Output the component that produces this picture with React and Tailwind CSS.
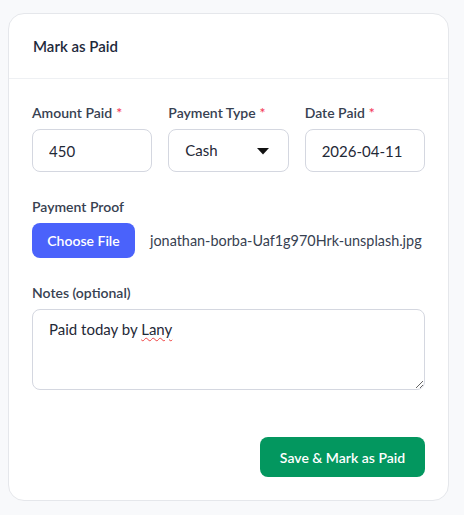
import { useState } from "react";

const font = { fontFamily: "Lato, 'Noto Sans', sans-serif" };

function Label({ children, required }) {
  return (
    <label className="mb-1.5 block text-[14px] leading-5 font-semibold text-[#374151]">
      {children}
      {required && <span className="ml-1 text-[#f43f5e]">*</span>}
    </label>
  );
}

export default function App() {
  const [amount, setAmount] = useState("450");
  const [type, setType] = useState("Cash");
  const [date, setDate] = useState("2026-04-11");

  return (
    <div className="min-h-[515px] w-[464px] bg-[#f8f9fb] pt-[13px]" style={font}>
      <div className="ml-2 w-[441px] rounded-2xl border border-[#e5e7eb] bg-white">
        {/* Header */}
        <div className="flex h-[65px] items-center border-b border-[#eef0f3] px-6">
          <h2 className="text-[15px] font-semibold text-[#1e293b]">Mark as Paid</h2>
        </div>

        {/* Body */}
        <div className="px-[23px] pt-6 pb-[23px]">
          <div className="grid grid-cols-3 gap-4">
            <div>
              <Label required>Amount Paid</Label>
              <input
                value={amount}
                onChange={(e) => setAmount(e.target.value)}
                className="h-[43px] w-full rounded-lg border border-[#d4d7e0] px-4 text-[15px] text-[#1f2937] outline-none"
              />
            </div>
            <div>
              <Label required>Payment Type</Label>
              <div className="relative">
                <select
                  value={type}
                  onChange={(e) => setType(e.target.value)}
                  className="h-[43px] w-full appearance-none rounded-lg border border-[#d4d7e0] bg-white px-4 text-[15px] text-[#1f2937] outline-none"
                >
                  <option>Cash</option>
                  <option>Bank Transfer</option>
                  <option>Card</option>
                </select>
                <svg
                  className="pointer-events-none absolute top-[19px] right-[20px]"
                  width="12"
                  height="7"
                  viewBox="0 0 12 7"
                >
                  <path d="M0 0h12L6 6.5z" fill="#111" />
                </svg>
              </div>
            </div>
            <div>
              <Label required>Date Paid</Label>
              <input
                value={date}
                onChange={(e) => setDate(e.target.value)}
                className="h-[43px] w-full rounded-lg border border-[#d4d7e0] px-4 text-[15px] text-[#1f2937] outline-none"
              />
            </div>
          </div>

          <div className="mt-[25px]">
            <Label>Payment Proof</Label>
            <div className="flex items-center gap-[15px]">
              <button className="h-[35px] w-[103px] shrink-0 rounded-lg bg-[#4a62fb] text-[14px] font-semibold text-white">
                Choose File
              </button>
              <span className="whitespace-nowrap text-[14.4px] text-[#374151]">
                jonathan-borba-Uaf1g970Hrk-unsplash.jpg
              </span>
            </div>
          </div>

          <div className="mt-[25px]">
            <Label>Notes (optional)</Label>
            <div className="h-[81px] w-full resize-y overflow-auto rounded-lg border border-[#d4d7e0] px-4 pt-[7px] text-[15px] leading-6 text-[#1f2937]">
              Paid today by{" "}
              <span className="underline decoration-[#ef4444] decoration-wavy decoration-1 underline-offset-2">
                Lany
              </span>
            </div>
          </div>

          <div className="mt-[47px] flex justify-end">
            <button className="h-[40px] w-[165px] rounded-lg bg-[#03975f] text-[14px] font-semibold text-white">
              Save &amp; Mark as Paid
            </button>
          </div>
        </div>
      </div>
    </div>
  );
}
